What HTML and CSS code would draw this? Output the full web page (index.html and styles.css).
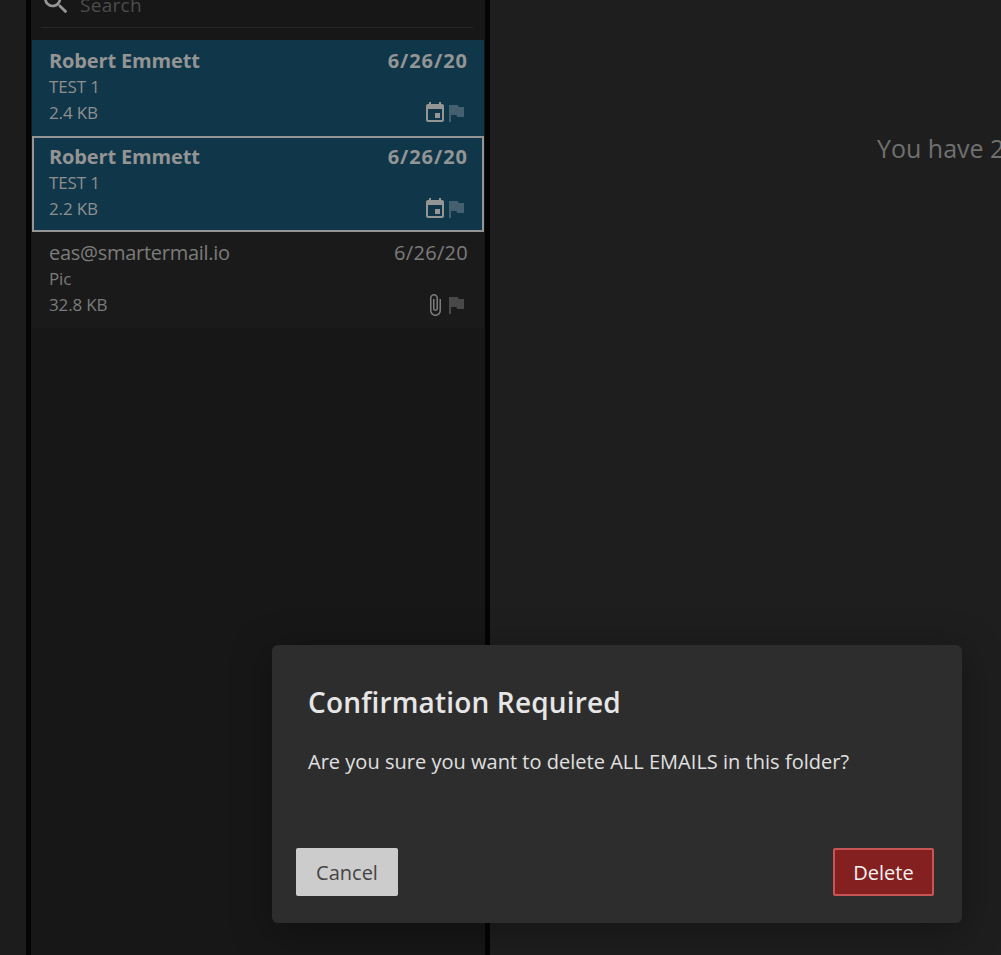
FILE: index.html
```html
<!DOCTYPE html>
<html lang="en">
<head>
<meta charset="utf-8">
<title>Mail</title>
<link rel="stylesheet" href="styles.css">
</head>
<body>
<div class="app">
  <div class="rail"></div>
  <section class="panel">
    <div class="search">
      <svg class="search-icon" viewBox="0 0 24 24"><path d="M15.5 14h-.79l-.28-.27A6.47 6.47 0 0 0 16 9.5 6.5 6.5 0 1 0 9.5 16c1.61 0 3.09-.59 4.23-1.57l.27.28v.79l5 4.99L20.49 19l-4.99-5zm-6 0C7.01 14 5 11.99 5 9.5S7.01 5 9.5 5 14 7.01 14 9.5 11.99 14 9.5 14z"/></svg>
      <span class="search-text">Search</span>
    </div>
    <div class="list">
      <article class="mail selected">
        <div class="row top"><span>Robert Emmett</span><span class="date">6/26/20</span></div>
        <div class="row"><span>TEST 1</span></div>
        <div class="row"><span>2.4 KB</span>
          <span class="icons">
            <svg class="ico" viewBox="0 0 24 24"><path d="M17 12h-5v5h5v-5zM16 1v2H8V1H6v2H5c-1.11 0-1.99.9-1.99 2L3 19a2 2 0 0 0 2 2h14c1.1 0 2-.9 2-2V5c0-1.1-.9-2-2-2h-1V1h-2zm3 18H5V8h14v11z"/></svg>
            <svg class="ico flag" viewBox="0 0 24 24"><path d="M14.4 6 14 4H5v17h2v-7h5.6l.4 2h7V6z"/></svg>
          </span>
        </div>
      </article>
      <article class="mail selected focused">
        <div class="row top"><span>Robert Emmett</span><span class="date">6/26/20</span></div>
        <div class="row"><span>TEST 1</span></div>
        <div class="row"><span>2.2 KB</span>
          <span class="icons">
            <svg class="ico" viewBox="0 0 24 24"><path d="M17 12h-5v5h5v-5zM16 1v2H8V1H6v2H5c-1.11 0-1.99.9-1.99 2L3 19a2 2 0 0 0 2 2h14c1.1 0 2-.9 2-2V5c0-1.1-.9-2-2-2h-1V1h-2zm3 18H5V8h14v11z"/></svg>
            <svg class="ico flag" viewBox="0 0 24 24"><path d="M14.4 6 14 4H5v17h2v-7h5.6l.4 2h7V6z"/></svg>
          </span>
        </div>
      </article>
      <article class="mail read">
        <div class="row top"><span>eas@smartermail.io</span><span class="date">6/26/20</span></div>
        <div class="row"><span>Pic</span></div>
        <div class="row"><span>32.8 KB</span>
          <span class="icons">
            <svg class="ico" viewBox="0 0 24 24"><path d="M16.5 6v11.5c0 2.21-1.79 4-4 4s-4-1.79-4-4V5c0-1.38 1.12-2.5 2.5-2.5s2.5 1.12 2.5 2.5v10.5c0 .55-.45 1-1 1s-1-.45-1-1V6H10v9.5c0 1.38 1.12 2.5 2.5 2.5s2.5-1.12 2.5-2.5V5c0-2.21-1.79-4-4-4S7 2.79 7 5v12.5c0 3.04 2.46 5.5 5.5 5.5s5.5-2.46 5.5-5.5V6h-1.5z"/></svg>
            <svg class="ico flag" viewBox="0 0 24 24"><path d="M14.4 6 14 4H5v17h2v-7h5.6l.4 2h7V6z"/></svg>
          </span>
        </div>
      </article>
    </div>
  </section>
  <main class="content">
    <p class="empty">You have 2 items selected</p>
  </main>
</div>
<div class="modal">
  <h2 class="modal-title">Confirmation Required</h2>
  <p class="modal-body">Are you sure you want to delete ALL EMAILS in this folder?</p>
  <div class="modal-actions">
    <button class="btn cancel">Cancel</button>
    <button class="btn delete">Delete</button>
  </div>
</div>
</body>
</html>
```
FILE: styles.css
```css
* { box-sizing: border-box; }
html, body { margin: 0; height: 100%; overflow: hidden; background: #1e1e1e; }
body { font-family: "Open Sans", "Noto Sans", sans-serif; }
.app { display: flex; height: 955px; width: 1001px; overflow: hidden; }
.rail { width: 26px; flex: none; background: #1c1c1c; }
.panel { width: 464px; flex: none; background: #171717; border-left: 5px solid #040404; border-right: 5px solid #040404; display: flex; flex-direction: column; }
.search { height: 28px; margin: 0 12px 0 10px; border-bottom: 1px solid #262626; display: flex; align-items: flex-end; overflow: hidden; padding-bottom: 10px; flex: none; }
.search-icon { width: 32px; height: 32px; fill: #969696; flex: none; margin-left: -1px; margin-bottom: -1px; }
.search-text { color: #4d4d4d; font-size: 19px; letter-spacing: 0.3px; line-height: 24px; margin-left: 8px; }
.list { margin: 12px 1px 0; }
.mail { height: 96px; padding: 8px 16px 8px 17px; font-size: 17px; line-height: 26px; color: #8f8f8f; }
.mail.selected { background: #0f3649; }
.mail.focused { border: 2px solid #949494; padding: 6px 14px 6px 15px; }
.mail.read { background: #1a1a1a; color: #7c7c7c; }
.row { display: flex; justify-content: space-between; align-items: center; height: 26px; letter-spacing: -0.15px; }
.row.top { font-size: 20px; letter-spacing: -0.15px; }
.row.top .date { letter-spacing: 0.3px; }
.read .row.top { letter-spacing: -0.27px; }
.selected .row.top { font-weight: 700; color: #949494; }
.selected .row.top .date { letter-spacing: 0.95px; }
.icons { display: flex; }
.ico { width: 24px; height: 24px; fill: #959595; display: block; }
.ico.flag { fill: #44606e; margin-left: -3px; }
.read .ico { fill: #7c7c7c; }
.read .ico.flag { fill: #484848; }
.content { flex: 1; background: #1e1e1e; padding-top: 130px; padding-left: 387px; overflow: hidden; }
.empty { margin: 0; color: #707070; font-size: 25px; line-height: 36px; white-space: nowrap; }
.modal { position: absolute; left: 272px; top: 645px; width: 690px; height: 278px; background: #2d2d2d; border-radius: 6px; box-shadow: 0 8px 40px rgba(0,0,0,.35); display: flex; flex-direction: column; padding: 37px 28px 27px 24px; }
.modal-title { margin: 0 0 0 12px; color: #e6e6e6; font-size: 28px; line-height: 40px; font-weight: 600; letter-spacing: 0.17px; }
.modal-body { margin: 25px 0 0 12px; color: #e0e0e0; font-size: 20px; line-height: 30px; letter-spacing: 0.02px; }
.modal-actions { margin-top: auto; display: flex; justify-content: space-between; }
.btn { height: 48px; font-family: inherit; font-size: 20px; border-radius: 2px; padding: 0; }
.cancel { width: 102px; background: #cccccc; border: none; color: #444; }
.delete { width: 101px; background: #852020; border: 2px solid #c85555; color: #f2f2f2; }
```
